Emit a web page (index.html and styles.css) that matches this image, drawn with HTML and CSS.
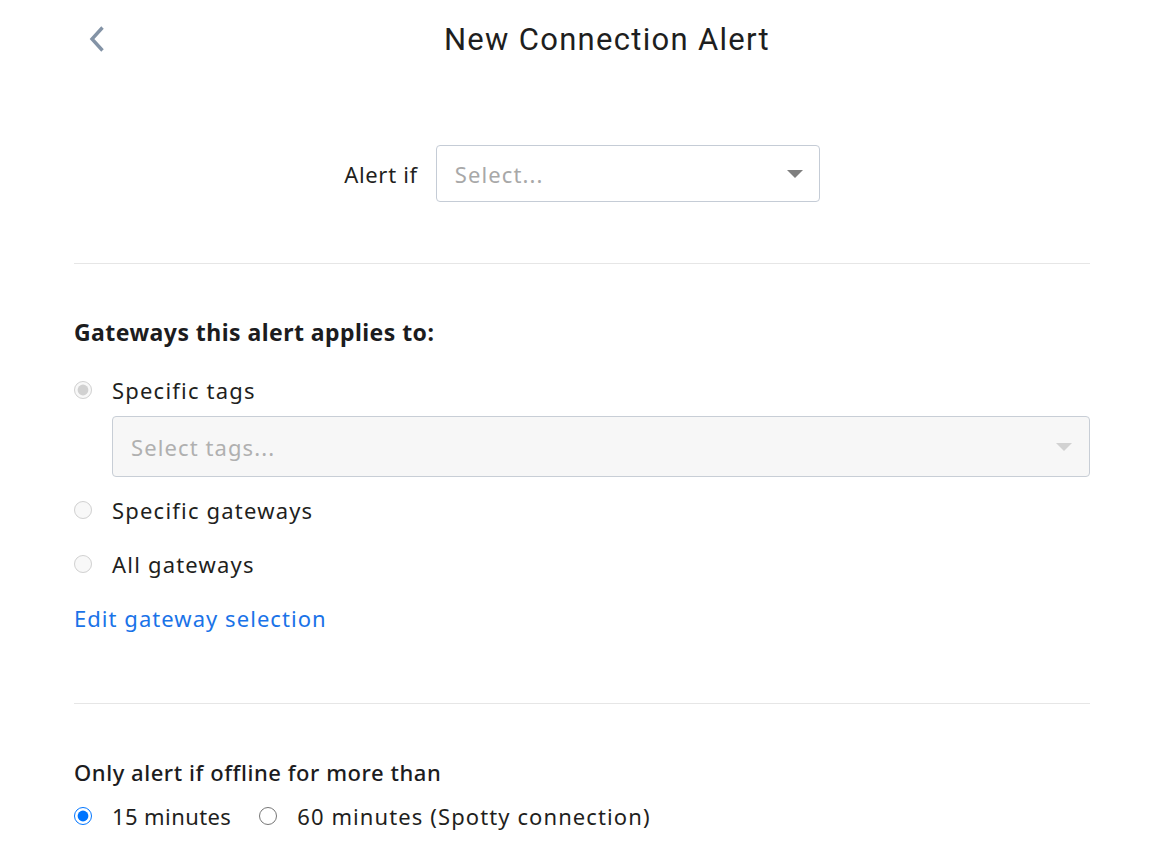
FILE: index.html
```html
<!DOCTYPE html>
<html>
<head>
<meta charset="utf-8">
<link rel="stylesheet" href="styles.css">
</head>
<body>
<div class="page">
  <header class="header">
    <button class="back" aria-label="Back">
      <svg width="16" height="26" viewBox="0 0 16 26"><path d="M13.5 1.5 L3 13 L13.5 24.5" fill="none" stroke="#8393a6" stroke-width="3.4"/></svg>
    </button>
    <h1 class="title">New Connection Alert</h1>
  </header>

  <div class="alert-row">
    <label class="alert-label">Alert if</label>
    <div class="select">
      <span class="placeholder">Select...</span>
      <span class="caret"></span>
    </div>
  </div>

  <hr class="divider divider-top">

  <h2 class="heading">Gateways this alert applies to:</h2>

  <label class="radio-row first">
    <input type="radio" name="g" checked disabled>
    <span>Specific tags</span>
  </label>
  <div class="select select-tags">
    <span class="placeholder">Select tags...</span>
    <span class="caret light"></span>
  </div>
  <label class="radio-row">
    <input type="radio" name="g" disabled>
    <span>Specific gateways</span>
  </label>
  <label class="radio-row">
    <input type="radio" name="g" disabled>
    <span>All gateways</span>
  </label>
  <a class="link" href="#">Edit gateway selection</a>

  <hr class="divider divider-bottom">

  <h3 class="subheading">Only alert if offline for more than</h3>
  <div class="inline-radios">
    <label class="radio-inline"><input type="radio" name="t" checked><span class="short">15 minutes</span></label>
    <label class="radio-inline"><input type="radio" name="t"><span class="long">60 minutes (Spotty connection)</span></label>
  </div>
</div>
</body>
</html>
```

FILE: styles.css
```css
* { box-sizing: border-box; }
html, body { margin: 0; padding: 0; background: #fff; }
body {
  font-family: "Noto Sans", "Open Sans", sans-serif;
  color: #1f1f21;
}
.page {
  width: 1016px;
  margin: 0 auto;
}
.header {
  display: flex;
  align-items: center;
  height: 78px;
}
.back {
  width: 50px;
  height: 40px;
  padding: 0 0 0 15px;
  border: 0;
  background: none;
  display: flex;
  align-items: center;
  justify-content: flex-start;
}
.title {
  flex: 1;
  margin: 0;
  text-align: center;
  font-family: "Roboto", sans-serif;
  font-weight: 400;
  font-size: 31px;
  letter-spacing: 1.3px;
  color: #1e1e20;
}
.alert-row {
  display: flex;
  justify-content: center;
  align-items: center;
  gap: 18px;
  margin-top: 67px;
}
.alert-label {
  font-size: 22px;
  letter-spacing: 0.7px;
}
.select {
  position: relative;
  display: flex;
  align-items: center;
  width: 384px;
  height: 57px;
  border: 1px solid #c5ccd6;
  border-radius: 4px;
  padding: 0 16px 0 18px;
  background: #fff;
}
.placeholder {
  font-size: 22px;
  letter-spacing: 1.1px;
  color: #a8a8a8;
}
.caret {
  margin-left: auto;
  width: 0;
  height: 0;
  border-left: 8px solid transparent;
  border-right: 8px solid transparent;
  border-top: 8px solid #7f7f7f;
}
.caret.light { border-top-color: #d2d2d2; }
.divider {
  border: 0;
  border-top: 1px solid #e6e6e6;
  margin: 0;
}
.divider-top { margin-top: 61px; }
.heading {
  margin: 53px 0 0;
  font-size: 23px;
  line-height: 30px;
  font-weight: 700;
  letter-spacing: 0.45px;
  color: #1c1c1e;
}
.radio-row {
  display: flex;
  align-items: center;
  height: 30px;
  margin-top: 24px;
  font-size: 22px;
  letter-spacing: 1.2px;
}
.radio-row.first { margin-top: 28px; }
.radio-row input, .radio-inline input {
  width: 18px;
  height: 18px;
  margin: 0 20px 0 0;
}
.select-tags {
  width: auto;
  height: 61px;
  margin: 11px 0 18px 38px;
  background: #f7f7f7;
  border-color: #c8ced6;
  padding-right: 17px;
}
.select-tags .placeholder { color: #b0b0b0; }
.select-tags + .radio-row { margin-top: 0; }
.link {
  display: block;
  margin-top: 24px;
  line-height: 30px;
  font-size: 22px;
  letter-spacing: 1.05px;
  color: #1a73e8;
  text-decoration: none;
}
.divider-bottom { margin-top: 70px; }
.subheading {
  margin: 53px 0 0;
  font-size: 22px;
  line-height: 30px;
  font-weight: 500;
  letter-spacing: 0.55px;
  color: #1c1c1e;
}
.inline-radios {
  display: flex;
  gap: 28px;
  margin-top: 14px;
}
.radio-inline {
  display: flex;
  align-items: center;
  height: 30px;
  font-size: 22px;
}
.short { letter-spacing: 0.4px; }
.long { letter-spacing: 1.1px; }
```
